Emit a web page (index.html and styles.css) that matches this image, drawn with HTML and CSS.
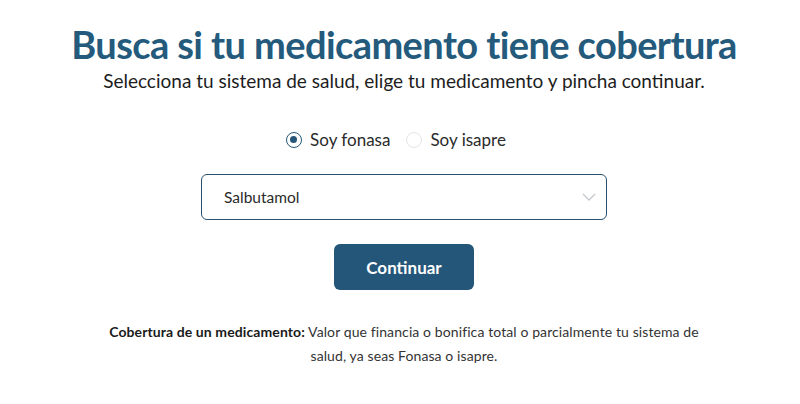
FILE: index.html
```html
<!DOCTYPE html>
<html lang="es">
<head>
<meta charset="utf-8">
<link rel="stylesheet" href="styles.css">
</head>
<body>
<main class="page">
  <h1 class="title">Busca si tu medicamento tiene cobertura</h1>
  <p class="subtitle">Selecciona tu sistema de salud, elige tu medicamento y pincha continuar.</p>
  <div class="radios">
    <label class="radio"><span class="dot checked"></span>Soy fonasa</label>
    <label class="radio"><span class="dot"></span>Soy isapre</label>
  </div>
  <div class="select">
    <span class="select-value">Salbutamol</span>
    <svg class="chevron" width="14" height="8" viewBox="0 0 14 8"><path d="M1 1l6 6 6-6" fill="none" stroke="#c4c8cc" stroke-width="1.3"/></svg>
  </div>
  <button class="btn">Continuar</button>
  <p class="note"><strong>Cobertura de un medicamento:</strong> Valor que financia o bonifica total o parcialmente tu sistema de salud, ya seas Fonasa o isapre.</p>
</main>
</body>
</html>
```
FILE: styles.css
```css
* { box-sizing: border-box; }
body {
  margin: 0;
  background: #fff;
  font-family: Lato, "Noto Sans", sans-serif;
  color: #222;
}
.page {
  display: flex;
  flex-direction: column;
  align-items: center;
  padding: 22px 0 0 8px;
}
.title {
  margin: 0;
  font-size: 38px;
  font-weight: 700;
  color: #245a7c;
  line-height: 44px;
  letter-spacing: -0.6px;
}
.subtitle {
  margin: 3px 0 0;
  font-size: 19px;
  line-height: 24px;
  color: #1d1d1d;
}
.radios {
  display: flex;
  gap: 16px;
  margin-top: 35px;
  margin-right: 16px;
}
.radio {
  display: flex;
  align-items: center;
  gap: 8px;
  font-size: 17px;
  color: #2a2a2a;
  line-height: 24px;
}
.dot {
  width: 16px;
  height: 16px;
  border-radius: 50%;
  border: 1px solid #e2e4e6;
  background: #fff;
  position: relative;
}
.dot.checked {
  border: 1.5px solid #26577a;
}
.dot.checked::after {
  content: "";
  position: absolute;
  left: 3px;
  top: 3px;
  width: 7px;
  height: 7px;
  border-radius: 50%;
  background: #26577a;
}
.select {
  margin-top: 22px;
  width: 406px;
  height: 46px;
  border: 1.5px solid #26506e;
  border-radius: 6px;
  display: flex;
  align-items: center;
  justify-content: space-between;
  padding: 0 10px 0 22px;
}
.select-value {
  font-size: 15.5px;
  color: #2a2a2a;
}
.btn {
  margin-top: 24px;
  width: 140px;
  height: 46px;
  border: none;
  border-radius: 6px;
  background: #245679;
  color: #fff;
  font-family: Lato, "Noto Sans", sans-serif;
  font-size: 17px;
  font-weight: 700;
}
.note {
  margin: 30px 0 0;
  width: 610px;
  text-align: center;
  font-size: 14px;
  letter-spacing: 0.1px;
  line-height: 24px;
  color: #333;
}
.note strong { color: #1a1a1a; }
```
